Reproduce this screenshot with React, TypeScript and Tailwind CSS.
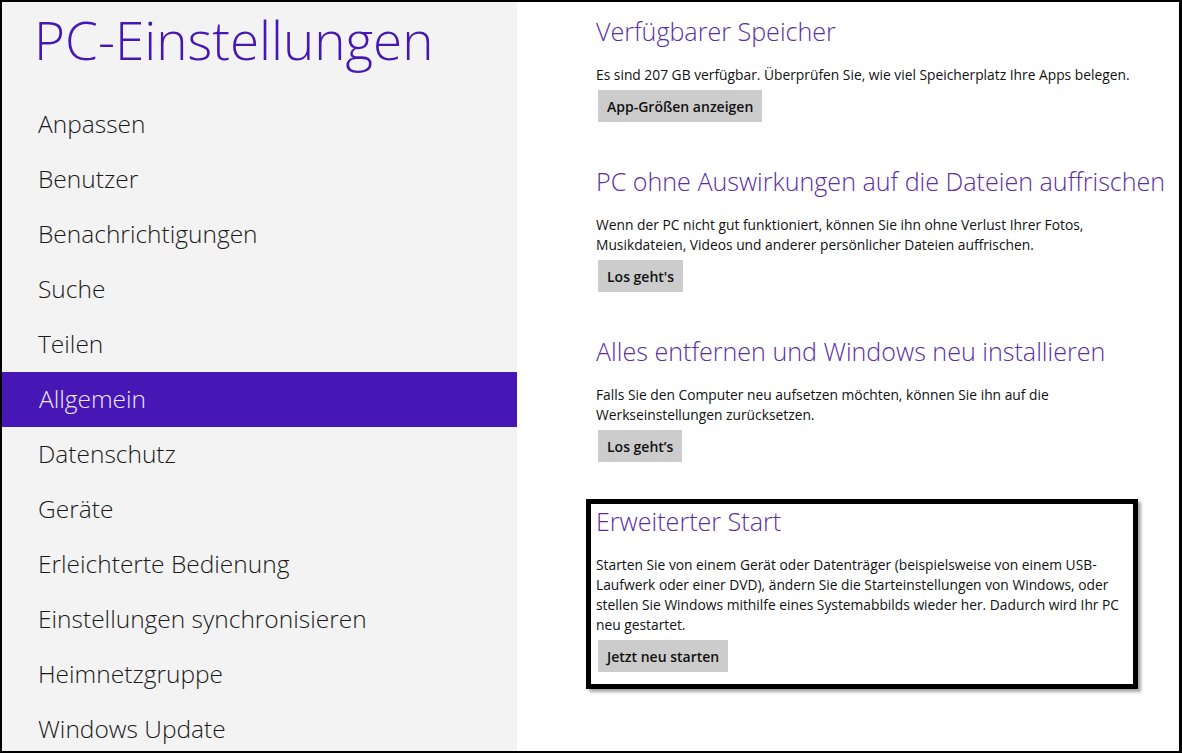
import React from 'react';

const navItems = [
  'Anpassen',
  'Benutzer',
  'Benachrichtigungen',
  'Suche',
  'Teilen',
  'Allgemein',
  'Datenschutz',
  'Geräte',
  'Erleichterte Bedienung',
  'Einstellungen synchronisieren',
  'Heimnetzgruppe',
  'Windows Update',
];

const font = { fontFamily: '"Open Sans", "Noto Sans", sans-serif' };

function Section({
  title,
  lines,
  button,
}: {
  title: string;
  lines: string[];
  button: string;
}) {
  return (
    <div className="flex flex-col">
      <h2 className="whitespace-nowrap text-[25.1px] font-light leading-[34px] text-[#5a2ea6]">{title}</h2>
      <div className="mt-[17px] text-[13.8px] leading-[20px] text-[#111]">
        {lines.map((l) => (
          <p key={l} className="whitespace-nowrap">{l}</p>
        ))}
      </div>
      <div className="mt-[5px]">
        <button className="ml-[2px] h-[32px] bg-[#cccccc] px-[9px] text-[14px] font-semibold text-[#111]">
          {button}
        </button>
      </div>
    </div>
  );
}

export default function App() {
  return (
    <div
      style={font}
      className="flex h-[753px] w-[1182px] overflow-hidden border-2 border-r-[3px] border-black bg-white"
    >
      <aside className="flex w-[515px] shrink-0 flex-col bg-[#f3f3f3]">
        <h1 className="ml-[32px] mt-[3px] h-[92px] shrink-0 text-[53px] font-light leading-[70px] text-[#4617b4]">
          PC-Einstellungen
        </h1>
        <nav className="flex shrink-0 flex-col">
          {navItems.map((item) => (
            <div
              key={item}
              className={
                item === 'Allgemein'
                  ? 'flex h-[55px] shrink-0 items-center bg-[#4617b4] pl-[37px] text-[24.5px] font-light text-[#efe9ff]'
                  : 'flex h-[55px] shrink-0 items-center pl-[36px] text-[24.5px] font-light text-[#1a1a1a]'
              }
            >
              {item}
            </div>
          ))}
        </nav>
      </aside>

      <main className="flex flex-1 flex-col pl-[79px] pt-[12px]">
        <div className="flex flex-col gap-[42px]">
          <Section
            title="Verfügbarer Speicher"
            lines={['Es sind 207 GB verfügbar. Überprüfen Sie, wie viel Speicherplatz Ihre Apps belegen.']}
            button="App-Größen anzeigen"
          />
          <Section
            title="PC ohne Auswirkungen auf die Dateien auffrischen"
            lines={[
              'Wenn der PC nicht gut funktioniert, können Sie ihn ohne Verlust Ihrer Fotos,',
              'Musikdateien, Videos und anderer persönlicher Dateien auffrischen.',
            ]}
            button="Los geht's"
          />
          <Section
            title="Alles entfernen und Windows neu installieren"
            lines={[
              'Falls Sie den Computer neu aufsetzen möchten, können Sie ihn auf die',
              'Werkseinstellungen zurücksetzen.',
            ]}
            button="Los geht’s"
          />
          <div className="-ml-[10px] -mt-[5px] w-[552px] border-[5px] border-black pb-[12px] pl-[5px] shadow-[3px_3px_3px_rgba(0,0,0,0.35)]">
            <Section
              title="Erweiterter Start"
              lines={[
                'Starten Sie von einem Gerät oder Datenträger (beispielsweise von einem USB-',
                'Laufwerk oder einer DVD), ändern Sie die Starteinstellungen von Windows, oder',
                'stellen Sie Windows mithilfe eines Systemabbilds wieder her. Dadurch wird Ihr PC',
                'neu gestartet.',
              ]}
              button="Jetzt neu starten"
            />
          </div>
        </div>
      </main>
    </div>
  );
}
